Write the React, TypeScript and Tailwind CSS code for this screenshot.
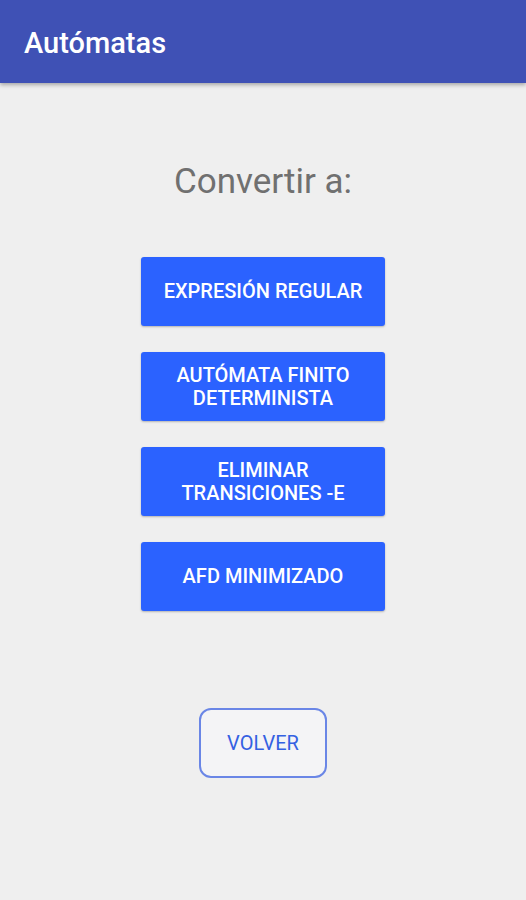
function ConvertButton({ children }: { children: React.ReactNode }) {
  return (
    <button className="flex h-[69px] w-[244px] items-center justify-center rounded-[3px] bg-[#2b62ff] px-2 text-center text-[20px] font-medium leading-[23px] text-white shadow-[0_1px_2px_rgba(0,0,0,0.25)]">
      {children}
    </button>
  );
}

export default function App() {
  return (
    <div
      className="flex min-h-[900px] w-full flex-col bg-[#efefef]"
      style={{ fontFamily: 'Roboto, "Noto Sans", sans-serif' }}
    >
      <header className="flex h-[83px] items-center bg-[#3f51b5] px-[24px] pt-[4px] shadow-[0_2px_4px_rgba(0,0,0,0.3)]">
        <h1 className="text-[29px] font-medium text-white">Autómatas</h1>
      </header>

      <main className="flex flex-col items-center pt-[78px]">
        <div className="h-[42px] text-[35px] leading-[42px] text-[#707070]">Convertir a:</div>

        <div className="mt-[54px] flex flex-col gap-[26px]">
          <ConvertButton>EXPRESIÓN REGULAR</ConvertButton>
          <ConvertButton>
            AUTÓMATA FINITO
            <br />
            DETERMINISTA
          </ConvertButton>
          <ConvertButton>
            ELIMINAR
            <br />
            TRANSICIONES -E
          </ConvertButton>
          <ConvertButton>AFD MINIMIZADO</ConvertButton>
        </div>

        <button className="mt-[97px] flex h-[70px] w-[128px] items-center justify-center rounded-[12px] border-2 border-[#6a86e6] bg-[#f4f4f6] text-[20px] text-[#3461e2]">
          VOLVER
        </button>
      </main>
    </div>
  );
}
